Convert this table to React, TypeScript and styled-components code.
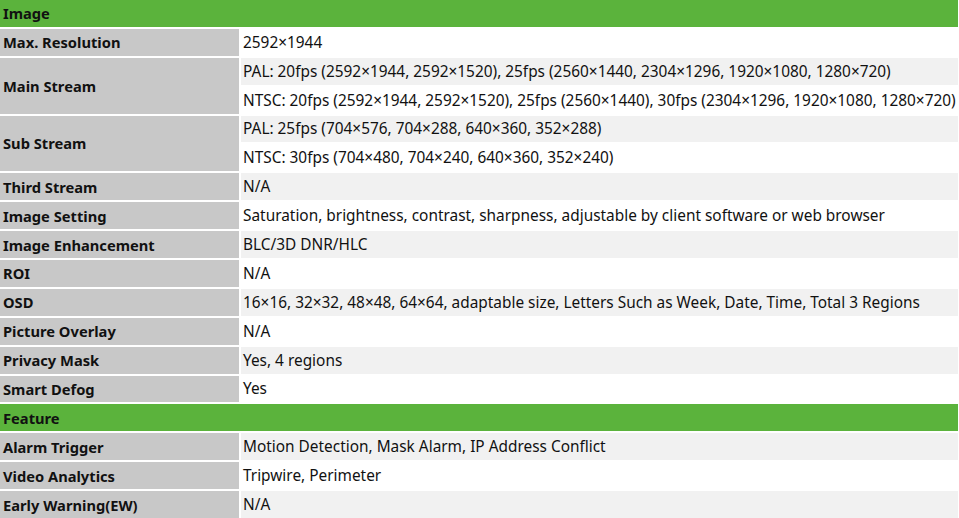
import React from "react";
import styled, { createGlobalStyle } from "styled-components";

const Global = createGlobalStyle`
  html, body { margin: 0; padding: 0; background: #ffffff; }
  body { font-family: "Noto Sans", "Open Sans", sans-serif; color: #111; }
`;

const Table = styled.div`
  display: grid;
  width: 958px;
  height: 518px;
  grid-template-columns: 239px 1fr;
  grid-template-rows: repeat(18, 1fr);
  gap: 2px;
`;

const Section = styled.div`
  grid-column: 1 / -1;
  background: #5bb33c;
  font-weight: 700;
  font-size: 14.7px;
  display: flex;
  align-items: center;
  padding-left: 3px;
  color: #111;
`;

const Label = styled.div<{ $span?: number }>`
  grid-row: span ${(p) => p.$span ?? 1};
  background: #c8c8c8;
  font-weight: 700;
  font-size: 14.7px;
  display: flex;
  align-items: center;
  padding-left: 3px;
  white-space: nowrap;
`;

const Value = styled.div<{ $shaded?: boolean }>`
  background: ${(p) => (p.$shaded ? "#f1f1f1" : "#ffffff")};
  font-size: 15.4px;
  display: flex;
  align-items: center;
  padding-left: 2px;
  white-space: nowrap;
  overflow: hidden;
`;

type Row = { label: string; values: string[] };

const imageRows: Row[] = [
  { label: "Max. Resolution", values: ["2592×1944"] },
  {
    label: "Main Stream",
    values: [
      "PAL: 20fps (2592×1944, 2592×1520), 25fps (2560×1440, 2304×1296, 1920×1080, 1280×720)",
      "NTSC: 20fps (2592×1944, 2592×1520), 25fps (2560×1440), 30fps (2304×1296, 1920×1080, 1280×720)",
    ],
  },
  {
    label: "Sub Stream",
    values: [
      "PAL: 25fps (704×576, 704×288, 640×360, 352×288)",
      "NTSC: 30fps (704×480, 704×240, 640×360, 352×240)",
    ],
  },
  { label: "Third Stream", values: ["N/A"] },
  {
    label: "Image Setting",
    values: ["Saturation, brightness, contrast, sharpness, adjustable by client software or web browser"],
  },
  { label: "Image Enhancement", values: ["BLC/3D DNR/HLC"] },
  { label: "ROI", values: ["N/A"] },
  {
    label: "OSD",
    values: ["16×16, 32×32, 48×48, 64×64, adaptable size, Letters Such as Week, Date, Time, Total 3 Regions"],
  },
  { label: "Picture Overlay", values: ["N/A"] },
  { label: "Privacy Mask", values: ["Yes, 4 regions"] },
  { label: "Smart Defog", values: ["Yes"] },
];

const featureRows: Row[] = [
  { label: "Alarm Trigger", values: ["Motion Detection, Mask Alarm, IP Address Conflict"] },
  { label: "Video Analytics", values: ["Tripwire, Perimeter"] },
  { label: "Early Warning(EW)", values: ["N/A"] },
];

function renderRows(rows: Row[], startShaded: boolean) {
  let idx = startShaded ? 1 : 0;
  const out: React.ReactNode[] = [];
  rows.forEach((r) => {
    out.push(
      <Label key={r.label} $span={r.values.length}>
        {r.label}
      </Label>
    );
    r.values.forEach((v, i) => {
      out.push(
        <Value key={r.label + i} $shaded={idx % 2 === 1}>
          {v}
        </Value>
      );
      idx++;
    });
  });
  return out;
}

export default function App() {
  return (
    <>
      <Global />
      <Table>
        <Section>Image</Section>
        {renderRows(imageRows, false)}
        <Section>Feature</Section>
        {renderRows(featureRows, true)}
      </Table>
    </>
  );
}
